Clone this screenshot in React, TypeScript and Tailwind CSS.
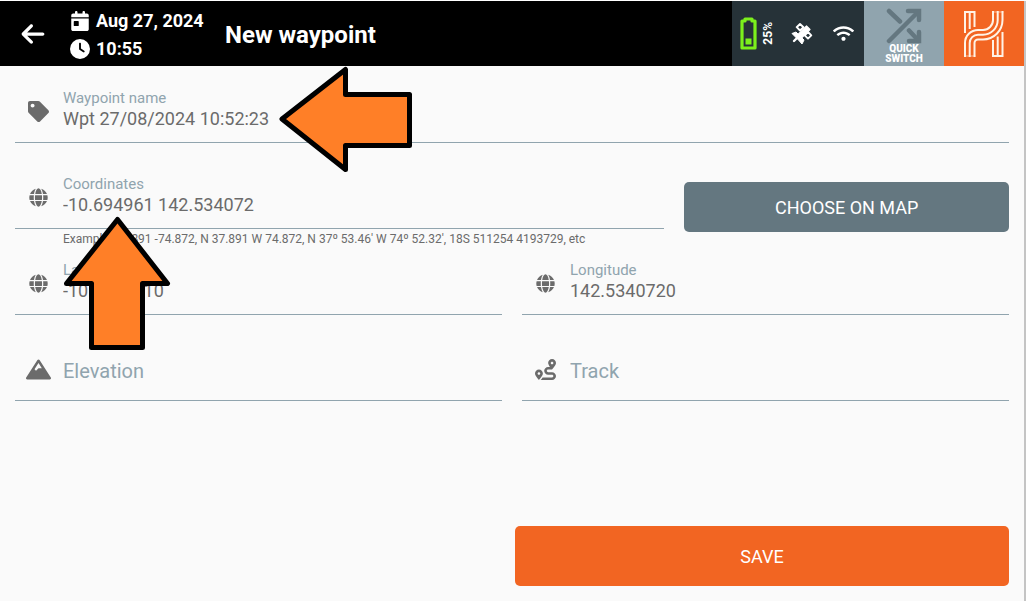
import React from 'react'
import { FaArrowLeft, FaCalendarDay, FaClock } from 'react-icons/fa6'
import { FaGlobe, FaMountain, FaRoute, FaTag, FaWifi } from 'react-icons/fa'

type FieldProps = {
  id: string
  label: string
  value: string
  icon: React.ReactNode
}

const Field = ({ id, label, value, icon }: FieldProps) => {
  return (
    <div className="flex h-[66px] items-center border-b border-[#90a4ae] pt-1">
      <div className="mr-px flex w-[47px] justify-center text-[#6b6b6b]">{icon}</div>
      <div className="flex min-w-0 flex-1 flex-col pb-[6px]">
        <label htmlFor={id} className="text-[15px] leading-[20px] text-[#90a4ae]">{label}</label>
        <input
          id={id}
          defaultValue={value}
          className="h-[21px] w-full bg-transparent text-[18px] leading-[21px] text-[#6b6b6b] outline-none"
        />
      </div>
    </div>
  )
}

const EmptyField = ({ id, label, icon }: Omit<FieldProps, 'value'>) => {
  return (
    <div className="flex h-[66px] items-center border-b border-[#90a4ae] pt-[6px]">
      <div className="mr-px flex w-[47px] justify-center pb-[2px] text-[#6b6b6b]">{icon}</div>
      <input
        id={id}
        aria-label={label}
        placeholder={label}
        className="h-[30px] min-w-0 flex-1 bg-transparent text-[20px] leading-[30px] text-[#6b6b6b] outline-none placeholder:text-[#90a4ae]"
      />
    </div>
  )
}

const Battery = () => (
  <svg width="17" height="33" viewBox="0 0 17 33" fill="none">
    <path d="M2 4 H5 V2 H12 V4 H15 V31 H2 Z" stroke="#7cf01c" strokeWidth="3.2" strokeLinejoin="round" />
    <rect x="5.5" y="21.5" width="6" height="6" fill="#7cf01c" />
  </svg>
)

const Satellite = () => (
  <svg width="22" height="22" viewBox="0 0 22 22" fill="none" stroke="#fff" strokeLinejoin="round">
    <path d="M9 1 L12.5 4.2 L9 7.5 L5.7 4.2 Z" strokeWidth="1.9" />
    <path d="M17 9 L20.3 12.3 L17 15.6 L13.7 12.3 Z" strokeWidth="1.9" />
    <path d="M7 11.5 L15.5 3 L19 6.5 L10.5 15 Z" fill="#fff" strokeWidth="1.2" />
    <path d="M1 10.5 L5 9 L13 17 L11 21 L7.5 17 Z" fill="#fff" strokeWidth="1" />
    <path d="M6.5 14.5 L3 18" strokeWidth="2.4" strokeLinecap="round" />
  </svg>
)

const Shuffle = () => (
  <svg width="36" height="36" viewBox="0 0 36 36" fill="none" stroke="#647780" strokeWidth="4.5" strokeLinecap="round">
    <path d="M3 33 L32 4 M3 3 L14 13.5 M23 22.5 L32 32" />
    <path d="M22 3 H33 V12 M33 24 V33 H23" />
  </svg>
)

const Logo = () => (
  <svg width="40" height="46" viewBox="0 0 40 46" fill="none" stroke="#fff3e6" strokeWidth="2">
    <path d="M1 22 V1 H10.5 V16 M5.7 1 V18" />
    <path d="M38.5 21 V45 H29 V29 M33.7 45 V25.5" />
    <path d="M1 46 V32 A13 13 0 0 1 14 19 H19 A10 10 0 0 0 29 9 V0" />
    <path d="M5.7 46 V32 A8.3 8.3 0 0 1 14 23.7 H19 A14.7 14.7 0 0 0 33.7 9 V0" />
    <path d="M10.5 46 V32 A3.5 3.5 0 0 1 14 28.5 H19 A19.5 19.5 0 0 0 38.5 9 V0" />
    <path d="M28 1 H39.5 M0 45 H11.5" strokeWidth="1" opacity="0.6" />
  </svg>
)

const Header = () => {
  return (
    <header className="flex h-[65px] items-stretch bg-black text-white">
      <button aria-label="Back" className="flex w-[66px] items-center justify-center">
        <FaArrowLeft size={26} />
      </button>

      <div className="flex w-[159px] flex-col justify-center gap-1 pl-1 pt-[2px] text-[18px] font-bold leading-6">
        <div className="flex items-center gap-[6px]">
          <span className="flex w-5 justify-center"><FaCalendarDay size={20} /></span>
          Aug 27, 2024
        </div>
        <div className="flex items-center gap-[6px]">
          <FaClock size={20} />
          10:55
        </div>
      </div>

      <h1 className="flex flex-1 items-center pt-[2px] text-[24px] font-bold">New waypoint</h1>

      <div className="flex w-[132px] items-center bg-[#263238]">
        <div className="flex w-12 items-center gap-[5px] pl-2">
          <Battery />
          <span className="rotate-180 text-[12px] font-bold leading-3 [writing-mode:vertical-rl]">25%</span>
        </div>
        <div className="flex w-[44px] justify-center"><Satellite /></div>
        <div className="flex flex-1 justify-center pr-[2px]"><FaWifi size={21} /></div>
      </div>

      <button className="flex w-20 flex-col items-center bg-[#90a4ae] pt-[7px] text-[10px] font-black leading-[10px]">
        <Shuffle />
        <span>QUICK<br />SWITCH</span>
      </button>

      <button aria-label="Home" className="flex w-20 items-center justify-center bg-[#f26522]">
        <Logo />
      </button>
    </header>
  )
}

// callouts that lie over the form
const Arrows = () => (
  <>
    <svg className="pointer-events-none absolute left-[278px] top-[64px]" width="136" height="108" viewBox="278 65 136 108">
      <path d="M282 119 L345.5 69.5 V94.5 H409.5 V145.5 H345.5 V169.5 Z" fill="#ff7f27" stroke="#000" strokeWidth="5" strokeLinejoin="round" />
    </svg>
    <svg className="pointer-events-none absolute left-[62px] top-[213px]" width="110" height="137" viewBox="62 215 110 137">
      <path d="M117.5 220.5 L167.5 284.5 H142.5 V348.5 H91.5 V284.5 H66.5 Z" fill="#ff7f27" stroke="#000" strokeWidth="5" strokeLinejoin="round" />
    </svg>
  </>
)

export default function App() {
  return (
    <div className="relative flex min-h-screen flex-col border-t border-white bg-[#fafafa] font-['Roboto',sans-serif]">
      <div className="flex flex-1 flex-col border-r-2 border-[#c4c4c4]">
        <Header />

        <form className="flex flex-1 flex-col px-[15px] pb-[15px] pt-[11px]" onSubmit={(e) => e.preventDefault()}>
          <Field id="name" label="Waypoint name" value="Wpt 27/08/2024 10:52:23" icon={<FaTag size={21} />} />

          <div className="mt-5 flex gap-5">
            <div className="min-w-0 flex-[2]">
              <Field id="coords" label="Coordinates" value="-10.694961 142.534072" icon={<FaGlobe size={19} />} />
              <p className="h-5 pl-12 text-[12px] leading-5 text-[#6b6b6b]">
                Example: 37.891 -74.872, N 37.891 W 74.872, N 37º 53.46' W 74º 52.32', 18S 511254 4193729, etc
              </p>
            </div>
            <button type="button" className="mt-[19px] h-[50px] flex-1 rounded-[5px] bg-[#647780] text-[18px] text-white">
              CHOOSE ON MAP
            </button>
          </div>

          <div className="grid grid-cols-2 gap-5">
            <Field id="lat" label="Latitude" value="-10.6949610" icon={<FaGlobe size={19} />} />
            <Field id="lng" label="Longitude" value="142.5340720" icon={<FaGlobe size={19} />} />
            <EmptyField id="elevation" label="Elevation" icon={<FaMountain size={25} />} />
            <EmptyField id="track" label="Track" icon={<FaRoute size={21} />} />
          </div>

          <div className="mt-auto grid grid-cols-2 gap-[6px]">
            <button type="submit" className="col-start-2 h-[60px] rounded-[5px] bg-[#f26522] text-[18px] text-white">
              SAVE
            </button>
          </div>
        </form>
      </div>

      <Arrows />
    </div>
  )
}
